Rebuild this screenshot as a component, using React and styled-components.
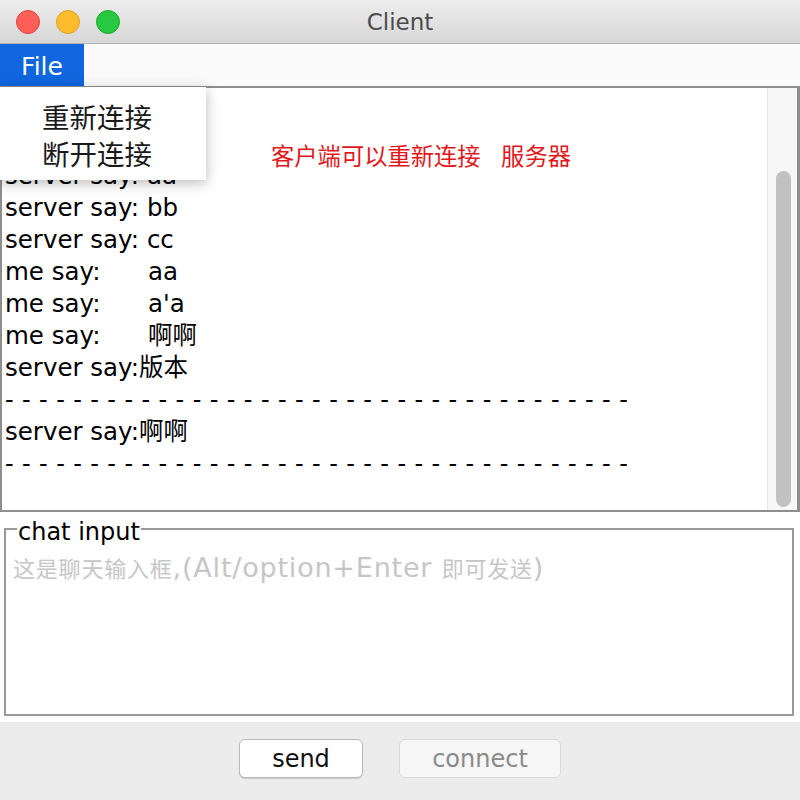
import styled, { createGlobalStyle } from 'styled-components';

const GlobalStyle = createGlobalStyle`
  html, body {
    margin: 0;
    padding: 0;
    background: #ffffff;
  }
  body {
    width: 800px;
    height: 800px;
    overflow: hidden;
    font-family: "DejaVu Sans", "Noto Sans CJK SC", sans-serif;
  }
`;

const Window = styled.div`
  width: 800px;
  height: 800px;
  display: flex;
  flex-direction: column;
  background: #ffffff;
`;

const TitleBar = styled.div`
  height: 43px;
  display: grid;
  grid-template-columns: 1fr auto 1fr;
  align-items: center;
  background: linear-gradient(#ededed, #d7d7d7);
  border-bottom: 1px solid #b3b3b3;
`;

const Lights = styled.div`
  display: flex;
  gap: 16px;
  padding-left: 16px;
`;

const Light = styled.span`
  width: 22px;
  height: 22px;
  border-radius: 50%;
  background: ${(props) => props.color};
  border: 1px solid ${(props) => props.edge};
`;

const Title = styled.div`
  font-size: 23px;
  color: #4b4b4b;
`;

const MenuBar = styled.div`
  height: 42px;
  display: flex;
  background: #fafafa;
`;

const MenuItem = styled.div`
  width: 84px;
  display: flex;
  align-items: center;
  justify-content: center;
  padding-top: 2px;
  box-sizing: border-box;
  font-size: 25px;
  color: ${(props) => (props.active ? '#ffffff' : '#111111')};
  background: ${(props) => (props.active ? '#0f66de' : 'transparent')};
`;

const Body = styled.div`
  position: relative;
  flex: 1;
  display: flex;
  flex-direction: column;
`;

const ChatPane = styled.div`
  height: 422px;
  display: flex;
  border: 2px solid #8e8e8e;
  border-right-width: 3px;
`;

const Messages = styled.div`
  flex: 1;
  padding: 8px 0 0 3px;
  font-size: 24.5px;
  line-height: 32px;
  color: #000000;
  white-space: pre;
  tab-size: 143px;
  overflow: hidden;
`;

const Line = styled.div`
  height: 32px;
  font-size: ${(props) => (props.rule ? '24px' : 'inherit')};
  letter-spacing: ${(props) => (props.rule ? '8.4px' : 'normal')};
`;

const Track = styled.div`
  width: 30px;
  display: flex;
  flex-direction: column;
  padding: 83px 6px 3px 8px;
  box-sizing: border-box;
  background: #f7f7f7;
  border-left: 1px solid #e6e6e6;
`;

const Thumb = styled.div`
  flex: 1;
  border-radius: 8px;
  background: #c1c1c1;
`;

const Popup = styled.div`
  position: absolute;
  top: 1px;
  left: 0;
  width: 206px;
  padding: 11px 0 8px;
  box-sizing: border-box;
  background: #ffffff;
  box-shadow: 0 3px 12px rgba(0, 0, 0, 0.28);
  font-family: "Noto Sans CJK SC", sans-serif;
  font-size: 27.5px;
  line-height: 37px;
  color: #1a1a1a;
`;

const PopupItem = styled.div`
  padding-left: 42px;
`;

const Hint = styled.div`
  position: absolute;
  top: 55px;
  left: 271px;
  font-family: "Noto Sans CJK SC", sans-serif;
  font-size: 23.3px;
  line-height: 28px;
  word-spacing: 5px;
  color: #e3161b;
  white-space: pre;
`;

const InputBox = styled.fieldset`
  margin: 1px 6px 0 4px;
  padding: 0 0 0 7px;
  height: 203px;
  box-sizing: border-box;
  border: 2px solid #9a9a9a;
  min-width: 0;
`;

const Legend = styled.legend`
  margin-left: 4px;
  padding: 6px 1px 0;
  font-size: 24px;
  line-height: 26px;
  color: #000000;
`;

const Placeholder = styled.div`
  padding-top: 5px;
  font-size: 27px;
  line-height: 34px;
  letter-spacing: 0.8px;
  color: #c6c6c6;
  white-space: nowrap;
`;

const Cjk = styled.span`
  font-family: "Noto Sans CJK SC", sans-serif;
  font-size: 22px;
`;

const Footer = styled.div`
  height: 78px;
  margin-top: auto;
  display: flex;
  justify-content: center;
  align-items: flex-start;
  gap: 36px;
  padding-top: 17px;
  box-sizing: border-box;
  background: #ececec;
`;

const Button = styled.button`
  width: ${(props) => props.width}px;
  height: 39px;
  border-radius: 6px;
  font-family: "DejaVu Sans", sans-serif;
  font-size: 24px;
  background: ${(props) => (props.disabled ? '#f6f6f6' : '#ffffff')};
  color: ${(props) => (props.disabled ? '#8a8a8a' : '#111111')};
  border: 1px solid ${(props) => (props.disabled ? '#dadada' : '#b9b9b9')};
  box-shadow: ${(props) => (props.disabled ? 'none' : '0 1px 1px rgba(0,0,0,0.15)')};
  padding: 0;
`;

const lines = [
  { text: '' },
  { text: '' },
  { text: 'server say: aa' },
  { text: 'server say: bb' },
  { text: 'server say: cc' },
  { text: 'me say:\taa' },
  { text: "me say:\ta'a" },
  { text: 'me say:\t啊啊' },
  { text: 'server say:版本' },
  { text: '-'.repeat(37), rule: true },
  { text: 'server say:啊啊' },
  { text: '-'.repeat(37), rule: true },
];

export default function App() {
  return (
    <>
      <GlobalStyle />
      <Window>
        <TitleBar>
          <Lights>
            <Light color="#ff5f57" edge="#e0443e" />
            <Light color="#ffbd2e" edge="#dea123" />
            <Light color="#28c940" edge="#1aab29" />
          </Lights>
          <Title>Client</Title>
          <div />
        </TitleBar>
        <MenuBar>
          <MenuItem active>File</MenuItem>
        </MenuBar>
        <Body>
          <ChatPane>
            <Messages>
              {lines.map((line, i) => (
                <Line key={i} rule={line.rule}>
                  {line.text}
                </Line>
              ))}
            </Messages>
            <Track>
              <Thumb />
            </Track>
          </ChatPane>
          <InputBox>
            <Legend>chat input</Legend>
            <Placeholder>
              <Cjk>这是聊天输入框</Cjk>,(Alt/option+Enter <Cjk>即可发送</Cjk>)
            </Placeholder>
          </InputBox>
          <Footer>
            <Button width={124}>send</Button>
            <Button width={162} disabled>
              connect
            </Button>
          </Footer>
          <Popup>
            <PopupItem>重新连接</PopupItem>
            <PopupItem>断开连接</PopupItem>
          </Popup>
          <Hint>客户端可以重新连接  服务器</Hint>
        </Body>
      </Window>
    </>
  );
}
